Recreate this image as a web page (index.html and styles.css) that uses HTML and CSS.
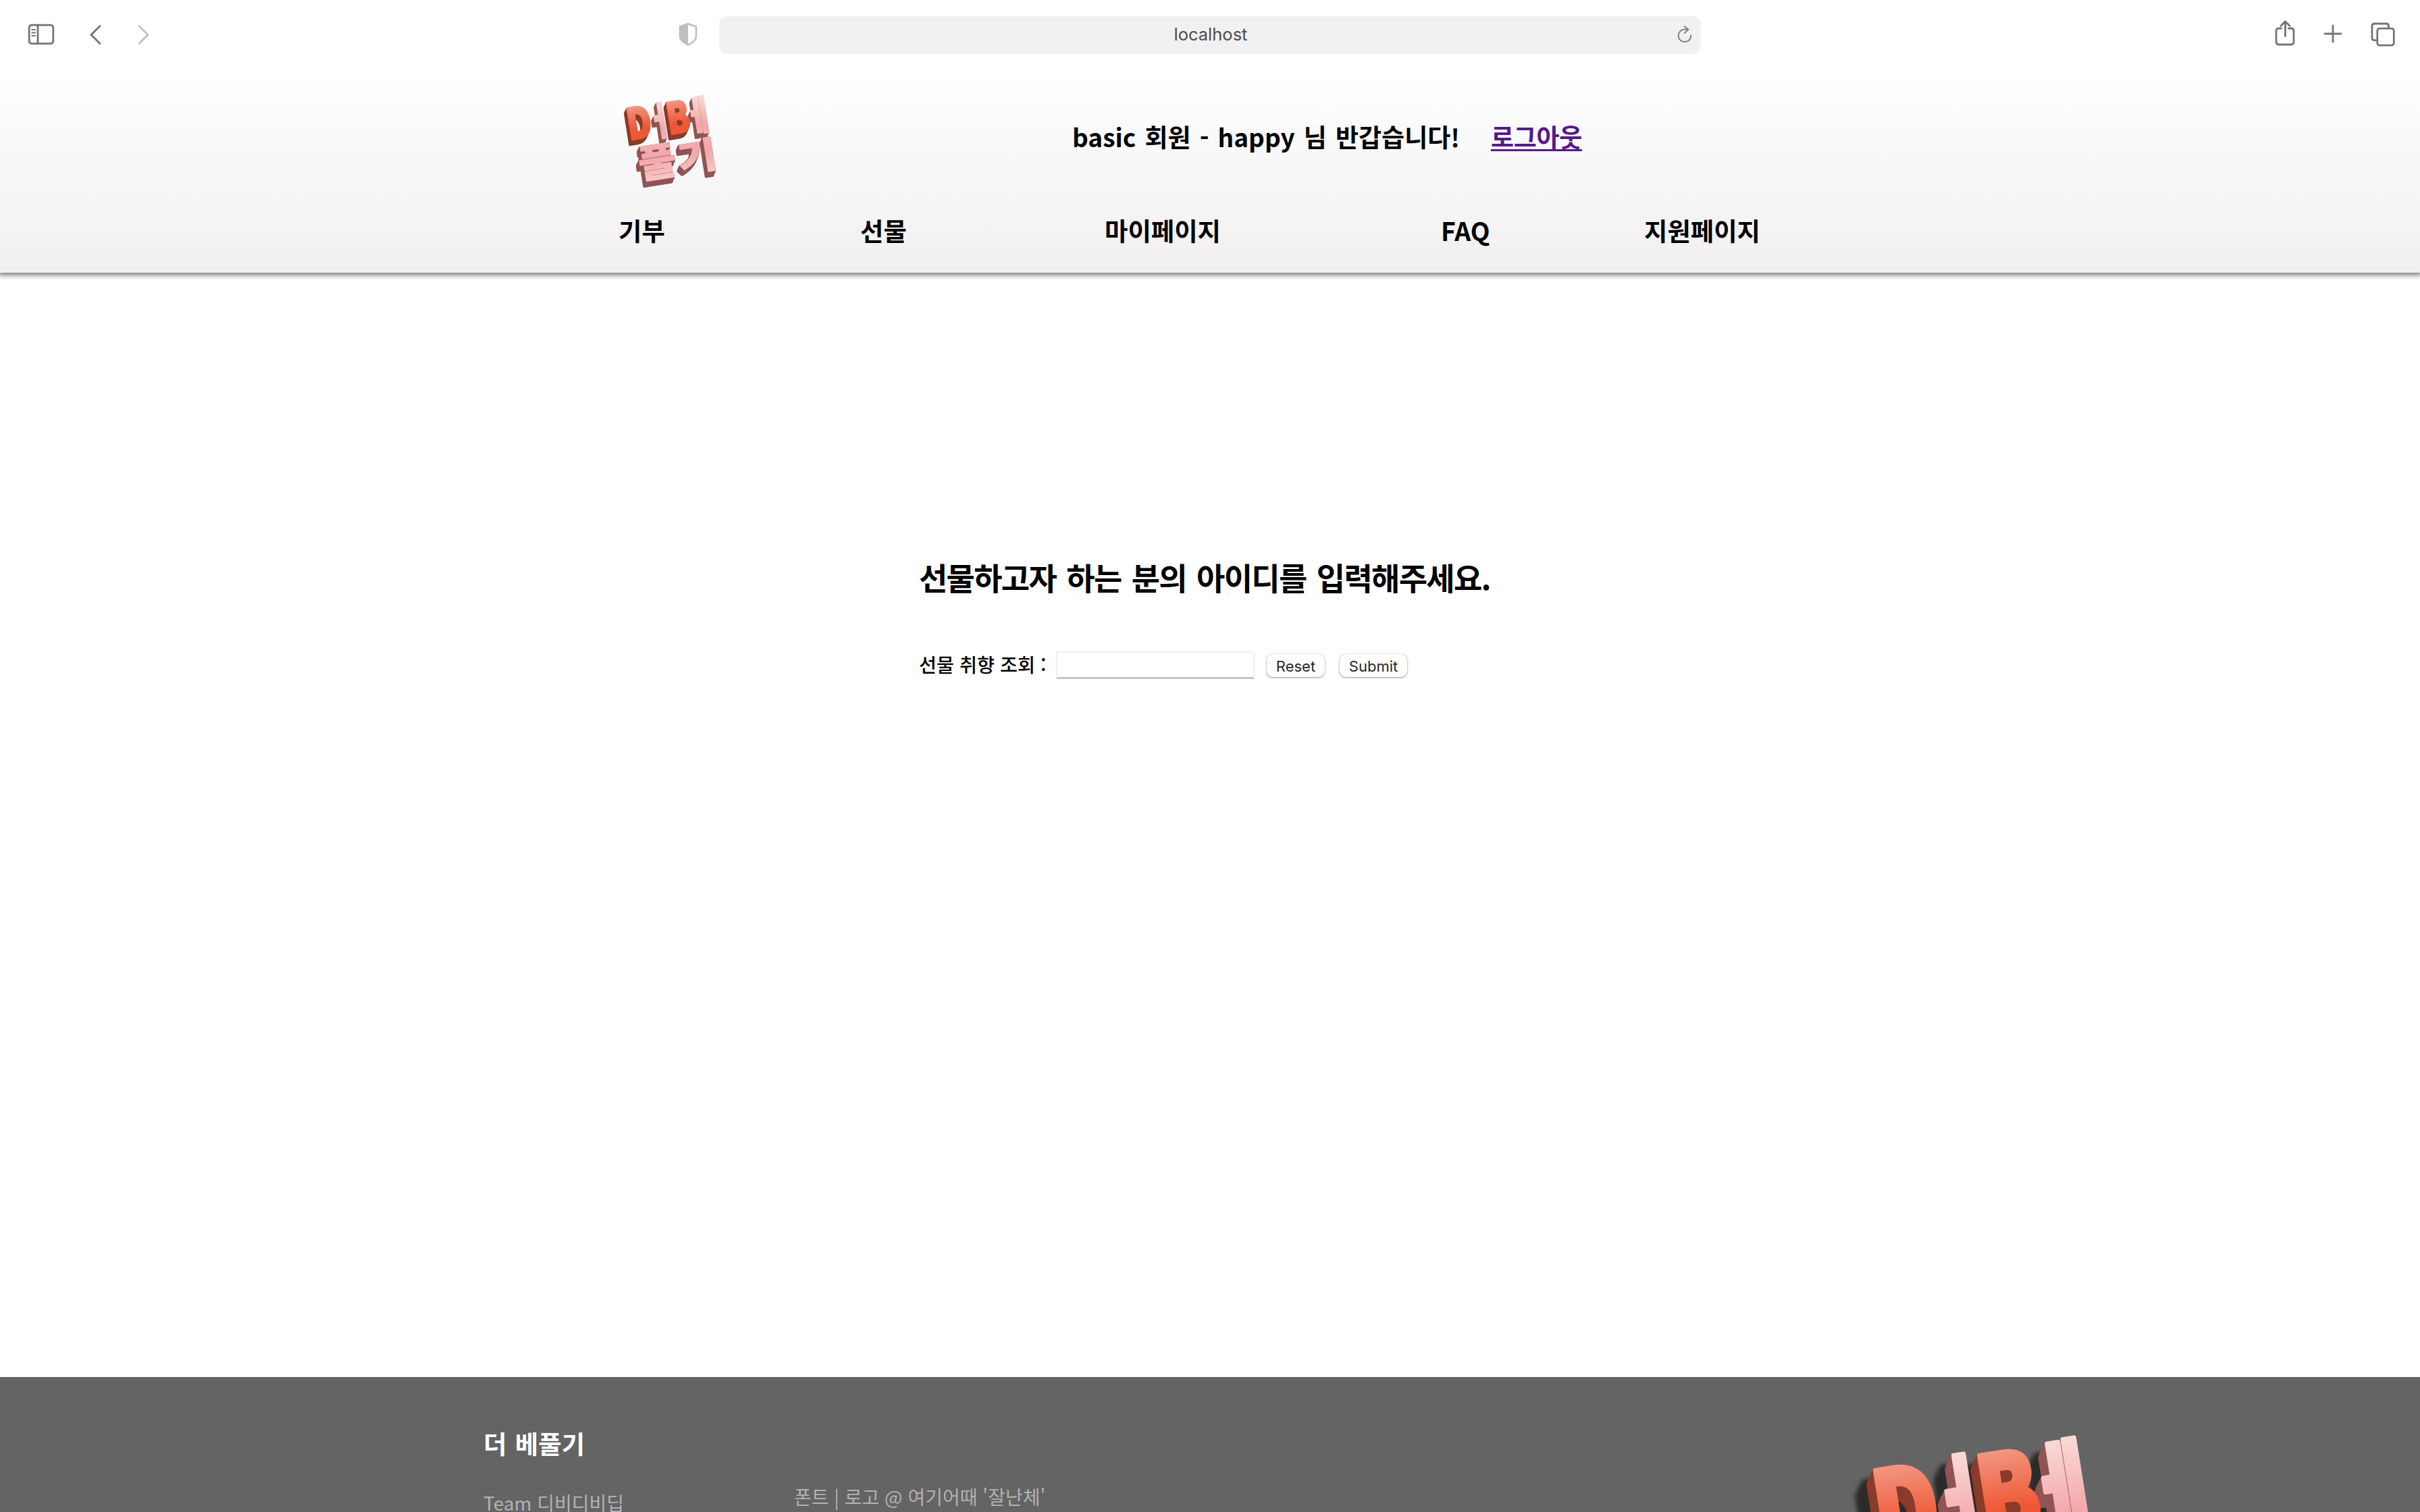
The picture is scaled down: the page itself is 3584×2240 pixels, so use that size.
FILE: index.html
```html
<!DOCTYPE html>
<html lang="ko">
<head>
<meta charset="utf-8">
<title>더 베풀기</title>
<link rel="stylesheet" href="styles.css">
</head>
<body>
<svg class="sprite" aria-hidden="true">
  <defs>
    <linearGradient id="orange" x1="0" y1="0" x2="0" y2="1">
      <stop offset=".15" stop-color="#f3a998"/><stop offset=".65" stop-color="#ee5733"/><stop offset="1" stop-color="#ee5a38"/>
    </linearGradient>
    <linearGradient id="pink" x1="0" y1="0" x2="0" y2="1">
      <stop offset=".15" stop-color="#fae0dd"/><stop offset=".7" stop-color="#f3a8aa"/><stop offset="1" stop-color="#f5b6b7"/>
    </linearGradient>
    <linearGradient id="rose" x1="0" y1="0" x2="0" y2="1">
      <stop offset=".1" stop-color="#f4b4b5"/><stop offset=".45" stop-color="#f3a6a8"/><stop offset="1" stop-color="#f8d0ce"/>
    </linearGradient>
    <g id="l-warm">
      <text id="w1" transform="translate(96 262) rotate(-9) scale(1.5 1.88)">D</text>
      <text id="w2" transform="translate(272 237) rotate(-9) scale(1.48 1.88)">B</text>
    </g>
    <g id="l-cool">
      <text id="c1" transform="translate(187 248) rotate(-9) scale(1.16 1.72)">ㅓ</text>
      <text id="c2" transform="translate(355 226) rotate(-9) scale(1.32 1.75)">ㅔ</text>
    </g>
    <g id="l-low">
      <text id="p1" transform="translate(147 434) rotate(-9) scale(1.83 1.7)">풀</text>
      <text id="p2" transform="translate(321 407) rotate(-9) scale(1.9 1.62)">기</text>
    </g>
    <clipPath id="face"><use href="#w1"/><use href="#w2"/><use href="#c1"/><use href="#c2"/><use href="#p1"/><use href="#p2"/></clipPath>
    <g id="cool-all"><use href="#l-cool"/><use href="#l-low"/></g>
    <g id="logo" class="logo-type">
      <g class="side-cool">
        <use href="#cool-all" x="-11" y="24"/><use href="#cool-all" x="-10" y="21"/><use href="#cool-all" x="-9" y="18"/><use href="#cool-all" x="-8" y="15"/><use href="#cool-all" x="-6" y="11"/><use href="#cool-all" x="-4" y="7"/><use href="#cool-all" x="-2" y="3"/>
      </g>
      <use href="#l-cool" class="face-cool"/>
      <use href="#l-low" class="face-low"/>
      <g class="side-warm">
        <use href="#l-warm" x="-11" y="24"/><use href="#l-warm" x="-10" y="21"/><use href="#l-warm" x="-9" y="18"/><use href="#l-warm" x="-8" y="15"/><use href="#l-warm" x="-6" y="11"/><use href="#l-warm" x="-4" y="7"/><use href="#l-warm" x="-2" y="3"/>
      </g>
      <use href="#l-warm" class="face-warm"/>
      <g clip-path="url(#face)" class="shine">
        <path d="M198 130L120 275H190V180zM240 100L195 190H210L256 110zM372 110L295 250H370L380 150zM430 80L360 200H376L442 96zM240 275L165 450H185L262 275zM285 300L215 440H245L300 330zM380 265L330 400H350L400 275zM450 270L415 340V360L458 290z"/>
      </g>
    </g>
  </defs>
</svg>

<div class="toolbar">
  <div class="tools tools-left">
    <svg width="40" height="32" viewBox="0 0 40 32" class="ico"><rect x="2.2" y="2.2" width="35.6" height="27.4" rx="3.5"/><path d="M15 2v28"/><path class="thin" d="M6.4 9H11M6.4 13.5H11M6.4 18H11"/></svg>
    <svg width="20" height="32" viewBox="0 0 20 32" class="ico back"><path d="M17 3.5L4 16.500L17 29.500"/></svg>
    <svg width="20" height="32" viewBox="0 0 20 32" class="ico forward"><path d="M3 3.500L16 16.500L3 29.500"/></svg>
  </div>
  <div class="address">
    <svg width="28" height="34" viewBox="0 0 28 34" class="shield"><path d="M14 1.200L26 5.500V20Q26 27 14 32.500Q2 27 2 20V5.500Z"/><path class="half" d="M14 1.200L2 5.500V20Q2 27 14 32.500Z"/></svg>
    <div class="field">
      <span>localhost</span>
      <svg width="24" height="28" viewBox="0 0 24 28" class="reload"><path d="M21.300 15.500A9.300 9.300 0 1 1 12 6.500H17"/><path d="M11.800 2L17.300 6.800L11.800 12"/></svg>
    </div>
  </div>
  <div class="tools tools-right">
    <svg width="30" height="38" viewBox="0 0 30 38" class="ico"><path d="M9.500 12H6Q2 12 2 16V32Q2 36 6 36H24Q28 36 28 32V16Q28 12 24 12H20.500M15.500 23.500V2.500M9 8.200L15.500 1.800L22 8.200"/></svg>
    <svg width="28" height="28" viewBox="0 0 28 28" class="ico"><path d="M14 2V26M2 14H26"/></svg>
    <svg width="36" height="36" viewBox="0 0 36 36" class="ico"><path d="M8.500 26.700H5.500Q2 26.700 2 23V5.500Q2 2 5.500 2H23Q26.500 2 26.500 5.500V9"/><rect x="9.800" y="9.200" width="24.500" height="25" rx="3.500"/></svg>
  </div>
</div>

<header class="header">
  <div class="top">
    <svg class="logo" width="200" height="180" viewBox="0 0 600 540"><use href="#logo"/></svg>
    <p class="greeting">basic 회원 - happy 님 반갑습니다!</p>
    <a class="logout" href="#">로그아웃</a>
  </div>
  <nav class="nav"><span>기부</span><span>선물</span><span>마이페이지</span><span>FAQ</span><span>지원페이지</span></nav>
</header>

<main class="main">
  <h1 class="title">선물하고자 하는 분의 아이디를 입력해주세요.</h1>
  <form class="form">
    <label class="label" for="gift">선물 취향 조회 :</label>
    <input class="input" id="gift" type="text">
    <button class="btn reset" type="reset">Reset</button>
    <button class="btn submit" type="button">Submit</button>
  </form>
</main>

<footer class="footer">
  <div class="team">
    <h2>더 베풀기</h2>
    <p>Team 디비디비딥</p>
  </div>
  <p class="credit">폰트 | 로고 @ 여기어때 '잘난체'</p>
  <svg class="logo-big" width="526" height="474" viewBox="0 0 600 540"><use href="#logo"/></svg>
</footer>
</body>
</html>
```
FILE: styles.css
```css
* { box-sizing: border-box; }
body {
  margin: 0;
  height: 2240px;
  overflow: hidden;
  display: flex;
  flex-direction: column;
  background: #fff;
  color: #000;
  font-family: "Noto Sans CJK KR", sans-serif;
}
h1, h2, p { margin: 0; white-space: nowrap; }
svg { display: block; flex: none; }
.sprite { width: 0; height: 0; position: absolute; }

.toolbar {
  height: 104px;
  flex: none;
  display: grid;
  grid-template-columns: 1005px 1fr 1065px;
  font-family: Inter, sans-serif;
}
.tools { display: flex; }
.tools-left { padding: 35px 0 0 41px; }
.back { margin-left: 50px; }
.forward { margin-left: 52px; }
.tools-right { justify-content: flex-end; padding: 30px 37px 0 0; }
.tools-right svg + svg { margin-left: 42px; }
.tools-right svg:nth-child(2) { margin-top: 6px; }
.tools-right svg:nth-child(3) { margin-top: 3px; }
.ico { fill: none; stroke: #747474; stroke-width: 2.8; stroke-linecap: round; stroke-linejoin: round; }
.ico .thin { stroke-width: 2; }
.forward { stroke: #bfbfbf; }
.address { display: flex; }
.shield { margin-top: 34px; fill: none; stroke: #bfbfbf; stroke-width: 2.6; stroke-linejoin: round; }
.shield .half { fill: #bfbfbf; stroke: none; }
.field {
  width: 1454px;
  height: 56px;
  margin: 24px 0 0 32px;
  border-radius: 12px;
  background: #f1f1f1;
  display: grid;
  grid-template-columns: 60px 1fr 58px;
  align-items: center;
  color: #4c4c4c;
  font-size: 25.5px;
}
.field span { grid-column: 2; text-align: center; line-height: 54px; margin-top: -2px; }
.reload { margin: -2px 0 0 22px; fill: none; stroke: #808080; stroke-width: 2; stroke-linecap: round; stroke-linejoin: round; }

.header {
  height: 300px;
  flex: none;
  background: linear-gradient(#fff, #f1eff0);
  box-shadow: 0 2px 7px 2px rgba(0, 0, 0, .5);
  clip-path: inset(0 0 -14px 0);
}
.top { display: flex; height: 207px; padding-left: 900px; }
.logo { margin-top: 16px; }
.greeting, .logout { margin-top: 68px; font-size: 37px; line-height: 60px; font-weight: 700; }
.greeting { margin-left: 488px; width: 620px; word-spacing: 2.8px; }
.logout { color: #551a8b; text-decoration-thickness: 3px; text-underline-offset: 3px; white-space: nowrap; letter-spacing: -.3px; }
.nav {
  display: grid;
  grid-template-columns: 358px 362px 498px 301px auto;
  padding-left: 916px;
  font-size: 37.4px;
  line-height: 60px;
  font-weight: 700;
}

.main { flex: 1; padding: 420px 0 0 1361px; }
.title { font-size: 46px; line-height: 60px; font-weight: 700; letter-spacing: -1.7px; word-spacing: 4px; }
.form { display: flex; margin-top: 80px; }
.label { width: 203px; margin-top: 0; font-size: 28.3px; line-height: 40px; font-weight: 500; white-space: nowrap; }
.input {
  width: 294px;
  height: 41px;
  margin-top: 1px;
  padding: 0 6px;
  border: 2px solid #f0f0f0;
  border-bottom: 3px solid #c6c6c6;
  background: #fff;
}
.btn {
  height: 34px;
  margin-top: 5px;
  padding: 2px 0 0;
  border: 0;
  border-radius: 9px;
  background: #fff;
  color: #262626;
  font: 22px/32px Inter, sans-serif;
  box-shadow: 0 1px 3px rgba(0, 0, 0, .4), 0 0 1px rgba(0, 0, 0, .3);
}
.reset { width: 86px; margin-left: 18px; }
.submit { width: 100px; margin-left: 22px; }

.footer {
  height: 200px;
  flex: none;
  display: flex;
  overflow: hidden;
  background: #646464;
  color: #b2b2b2;
  padding-left: 716px;
}
.team { width: 460px; padding-top: 68px; }
.team h2 { color: #fff; font-size: 37.4px; line-height: 60px; font-weight: 700; word-spacing: 2px; }
.team p { margin-top: 28px; font-size: 28px; line-height: 60px; }
.credit { width: 1525px; padding-top: 147px; font-size: 28px; line-height: 60px; }
.logo-big { margin-top: 32px; filter: drop-shadow(-17px 17px 3px #2b2b2b); }

.logo-type { font-family: "Noto Sans CJK KR", sans-serif; font-size: 100px; font-weight: 900; stroke-linejoin: round; stroke-width: 5px; }
.side-cool { fill: #8f5453; stroke: #8f5453; }
.side-warm { fill: #8b3b29; stroke: #8b3b29; }
.face-cool { fill: url(#pink); stroke: url(#pink); stroke-width: 5px; }
.face-low { fill: url(#rose); stroke: url(#rose); stroke-width: 2px; }
.face-warm { fill: url(#orange); stroke: url(#orange); stroke-width: 5px; }
.shine { fill: #fff; fill-opacity: .26; stroke: none; }
```
